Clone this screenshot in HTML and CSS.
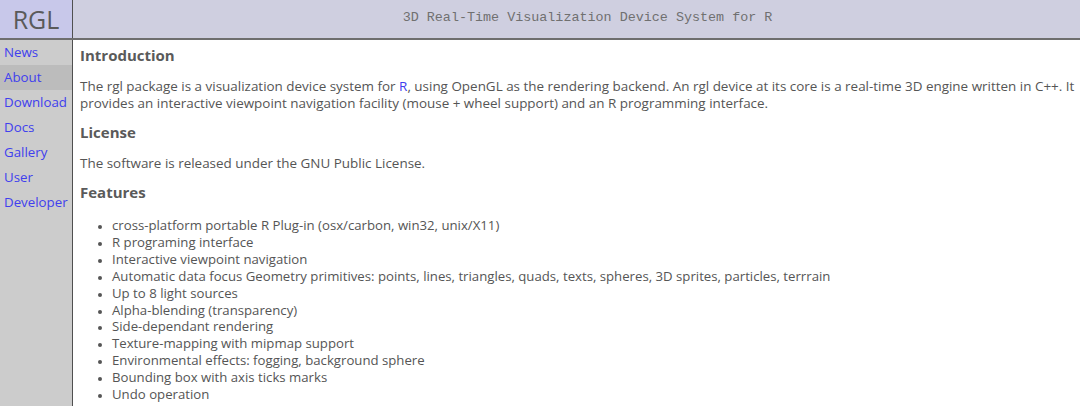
FILE: index.html
```html
<!DOCTYPE html>
<html>
<head>
<meta charset="utf-8">
<link rel="stylesheet" href="styles.css">
</head>
<body>
<div class="page">
  <div class="header">
    <div class="logo">RGL</div>
    <div class="title">3D Real-Time Visualization Device System for R</div>
  </div>
  <div class="main">
    <nav class="nav">
      <a class="nav-item" href="#">News</a>
      <a class="nav-item active" href="#">About</a>
      <a class="nav-item" href="#">Download</a>
      <a class="nav-item" href="#">Docs</a>
      <a class="nav-item" href="#">Gallery</a>
      <a class="nav-item" href="#">User</a>
      <a class="nav-item" href="#">Developer</a>
    </nav>
    <div class="content">
      <h2>Introduction</h2>
      <p>The rgl package is a visualization device system for <a class="inline-link" href="#">R</a>, using OpenGL as the rendering backend. An rgl device at its core is a real-time 3D engine written in C++. It provides an interactive viewpoint navigation facility (mouse + wheel support) and an R programming interface.</p>
      <h2>License</h2>
      <p>The software is released under the GNU Public License.</p>
      <h2>Features</h2>
      <ul>
        <li>cross-platform portable R Plug-in (osx/carbon, win32, unix/X11)</li>
        <li>R programing interface</li>
        <li>Interactive viewpoint navigation</li>
        <li>Automatic data focus Geometry primitives: points, lines, triangles, quads, texts, spheres, 3D sprites, particles, terrrain</li>
        <li>Up to 8 light sources</li>
        <li>Alpha-blending (transparency)</li>
        <li>Side-dependant rendering</li>
        <li>Texture-mapping with mipmap support</li>
        <li>Environmental effects: fogging, background sphere</li>
        <li>Bounding box with axis ticks marks</li>
        <li>Undo operation</li>
      </ul>
    </div>
  </div>
</div>
</body>
</html>
```

FILE: styles.css
```css
html, body {
  margin: 0;
  padding: 0;
  background: #ffffff;
}
body {
  font-family: "Open Sans", "Noto Sans", sans-serif;
  font-size: 13.45px;
  color: #555555;
  overflow: hidden;
}
.page {
  width: 1080px;
  height: 406px;
}
.header {
  display: flex;
  height: 38px;
  border-bottom: 2px solid #6e6e6e;
  background: #cfcfe0;
}
.logo {
  width: 72px;
  border-right: 1px solid #505050;
  background: #c8c8ea;
  color: #5a5a5a;
  font-family: "Open Sans", "Noto Sans", sans-serif;
  font-size: 25px;
  line-height: 38px;
  text-align: center;
}
.title {
  flex: 1;
  font-family: "Liberation Mono", monospace;
  font-size: 13.4px;
  color: #707070;
  line-height: 36px;
  text-align: center;
  padding-left: 22px;
}
.main {
  display: flex;
  height: 366px;
}
.nav {
  width: 72px;
  border-right: 1px solid #505050;
  background: #cccccc;
  display: flex;
  flex-direction: column;
}
.nav-item {
  display: block;
  height: 25px;
  line-height: 25px;
  padding-left: 4px;
  color: #4040ee;
  text-decoration: none;
  font-size: 13.3px;
}
.nav-item.active {
  background: #bcbcbc;
}
.content {
  flex: 1;
  padding: 5px 0 0 7px;
}
h2 {
  margin: 0;
  font-size: 15px;
  font-weight: bold;
  color: #5a5a5a;
  line-height: 20px;
}
p {
  margin: 13px 0 10px;
  line-height: 17px;
}
.inline-link {
  display: inline-block;
  line-height: 17px;
  color: #4040ee;
  text-decoration: none;
}
ul {
  margin: 15px 0 0;
  padding-left: 32px;
  line-height: 16.9px;
  font-size: 13.2px;
}
li::marker {
  font-size: 10px;
}
```
